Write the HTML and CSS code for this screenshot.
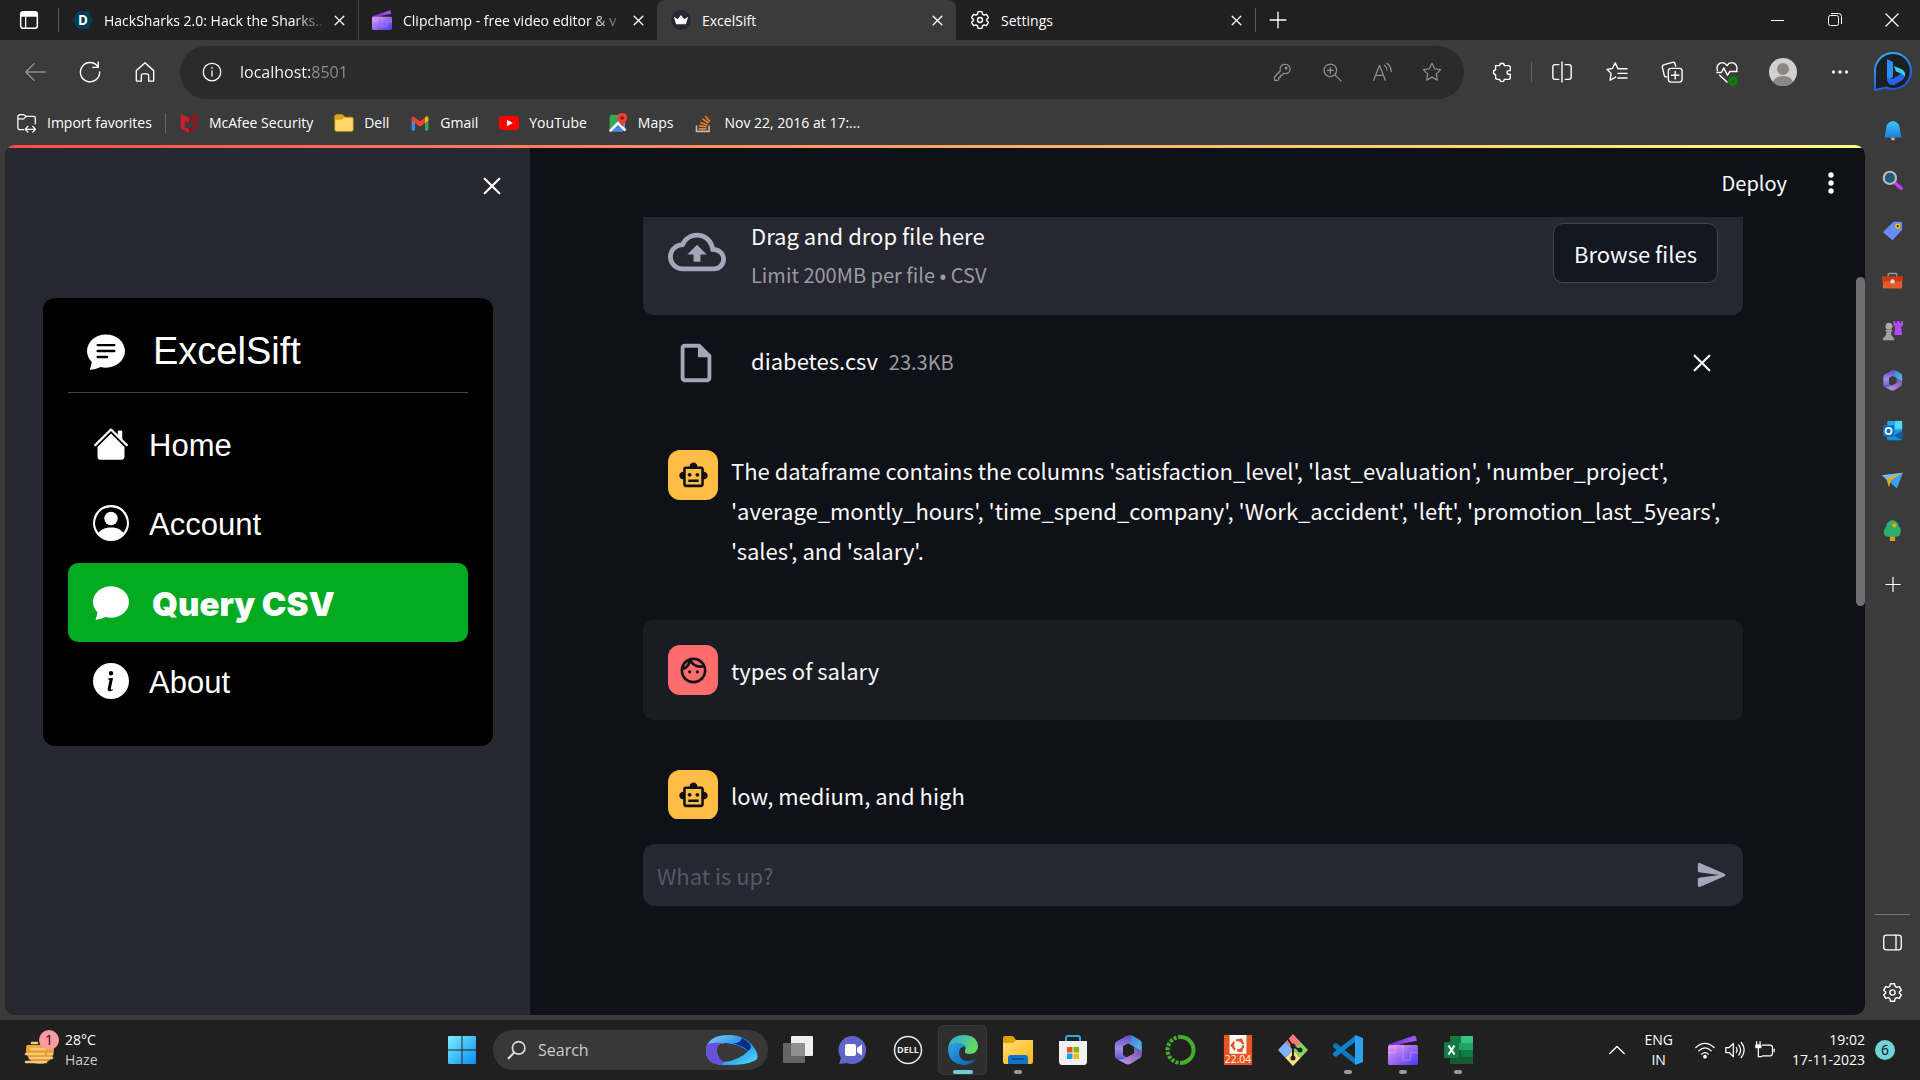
FILE: index.html
```
<!DOCTYPE html>
<html lang="en">
<head>
  <meta charset="UTF-8">
  <meta name="viewport" content="width=device-width, initial-scale=1.0">
  <title>ExcelSift</title>
  <link rel="stylesheet" href="styles.css">
</head>
<body>
  <!-- shared icons -->
  <svg class="defs" aria-hidden="true">
    <defs>
      <linearGradient id="g-bing" x1="0" y1="0" x2="0.4" y2="1"><stop offset="0" stop-color="#2bb8f5"/><stop offset="1" stop-color="#1b58e0"/></linearGradient>
      <linearGradient id="g-win" x1="0" y1="0" x2="1" y2="1"><stop offset="0" stop-color="#7ceeff"/><stop offset="1" stop-color="#0a8cf5"/></linearGradient>
      <linearGradient id="g-clip" x1="0" y1="0" x2="1" y2="1"><stop offset="0" stop-color="#e79bf8"/><stop offset="1" stop-color="#4b37ee"/></linearGradient>
      <linearGradient id="g-flap" x1="0" y1="0" x2="1" y2="0"><stop offset="0" stop-color="#6c22d8"/><stop offset="1" stop-color="#a65cf5"/></linearGradient>
      <linearGradient id="g-m1" x1="0" y1="0" x2="1" y2="1"><stop offset="0" stop-color="#3f6fd0"/><stop offset="1" stop-color="#52c8f2"/></linearGradient>
      <linearGradient id="g-m2" x1="0" y1="0" x2="0" y2="1"><stop offset="0" stop-color="#5b4bc4"/><stop offset="0.5" stop-color="#a78ae8"/><stop offset="1" stop-color="#3658c4"/></linearGradient>
      <linearGradient id="g-m3" x1="1" y1="0" x2="0" y2="1"><stop offset="0" stop-color="#6a4aa8"/><stop offset="1" stop-color="#cda0ea"/></linearGradient>
      <linearGradient id="g-edge1" x1="0" y1="0" x2="1" y2="0.4"><stop offset="0" stop-color="#25a5e2"/><stop offset="1" stop-color="#63dc63"/></linearGradient>
      <linearGradient id="g-edge2" x1="0" y1="0" x2="1" y2="1"><stop offset="0" stop-color="#2ea8e8"/><stop offset="1" stop-color="#0a5cb4"/></linearGradient>
      <linearGradient id="g-bell" x1="0" y1="0" x2="0" y2="1"><stop offset="0" stop-color="#3dc8f8"/><stop offset="1" stop-color="#1f7fd8"/></linearGradient>
      <linearGradient id="g-sun" x1="0" y1="0" x2="0" y2="1"><stop offset="0" stop-color="#f8c33a"/><stop offset="1" stop-color="#ee7a1c"/></linearGradient>
      <linearGradient id="g-loop" x1="0" y1="0" x2="1" y2="1"><stop offset="0" stop-color="#8ed0ff"/><stop offset="0.5" stop-color="#1c8be8"/><stop offset="1" stop-color="#56e6f6"/></linearGradient>
      <linearGradient id="g-folder" x1="0" y1="0" x2="1" y2="1"><stop offset="0" stop-color="#ffdd70"/><stop offset="1" stop-color="#fcb714"/></linearGradient>
    </defs>
    <symbol id="close" viewBox="0 0 24 24"><path d="M4 4l16 16M20 4L4 20" fill="none" stroke="currentColor" stroke-width="2.4" stroke-linecap="round"/></symbol>
    <symbol id="plus" viewBox="0 0 24 24"><path d="M12 2v20M2 12h20" fill="none" stroke="currentColor" stroke-width="1.6"/></symbol>
    <symbol id="gear" viewBox="0 0 24 24"><path d="M9.7 2h4.6l.7 3 1.9 1.1 2.9-.9 2.3 4-2.2 2.1v1.4l2.2 2.1-2.3 4-2.9-.9-1.9 1.1-.7 3H9.700l-.7-3-1.900-1.100-2.900.9-2.300-4 2.200-2.100v-1.400L1.900 9.200l2.300-4 2.900.9L9 5z" fill="none" stroke="currentColor" stroke-width="1.6" stroke-linejoin="round"/><circle cx="12" cy="12" r="3" fill="none" stroke="currentColor" stroke-width="1.6"/></symbol>
    <symbol id="clip" viewBox="0 0 24 24"><path d="M0 7.500L20 .8q2-.6 2.600 1.200L23 4.500 1.500 9z" fill="url(#g-flap)"/><rect x="0" y="8" width="24" height="16" rx="1.500" fill="url(#g-clip)"/><path d="M0 14h6V8h6v12h6v-6h6" fill="none" stroke="#fff" stroke-opacity=".2" stroke-width="1"/></symbol>
    <symbol id="m365" viewBox="0 0 24 24"><path d="M9 1.500L13 .3q2-.3 3 .5l5.500 3.200q1.500 1 1.500 2.500V14l-6 2.500V9.500l-6-3.500z" fill="url(#g-m1)"/><path d="M14 .3q-1-.3-3 .5L3 5Q1.500 6 1.500 8v9q0 1 1.500 2l4 2.500 5-3-4-2.500V9l7-4z" fill="url(#g-m2)"/><path d="M23 12.500V16q0 1.500-1.500 2.500L14 23q-2 1-4 0l-6-3.500h3q1 0 2-.7l8-4.300V9.500z" fill="url(#g-m3)"/></symbol>
    <symbol id="robot" viewBox="0 0 24 24"><path fill="currentColor" d="M20 9V7c0-1.100-.9-2-2-2h-3c0-1.660-1.340-3-3-3S9 3.340 9 5H6c-1.100 0-2 .9-2 2v2c-1.660 0-3 1.340-3 3s1.340 3 3 3v4c0 1.100.9 2 2 2h12c1.100 0 2-.9 2-2v-4c1.660 0 3-1.340 3-3s-1.340-3-3-3zm-2 10H6V7h12v12zm-9-6c-.83 0-1.500-.67-1.500-1.500S8.170 10 9 10s1.500.67 1.500 1.500S9.830 13 9 13zm7.500-1.500c0 .83-.67 1.500-1.500 1.500s-1.500-.67-1.500-1.500.67-1.500 1.500-1.500 1.500.67 1.500 1.500zM8 15h8v2H8v-2z"/></symbol>
  </svg>

  <div class="tabbar">
    <button class="tab-actions" aria-label="Tab actions"><svg viewBox="0 0 24 24" width="20" height="20"><rect x="2" y="2" width="20" height="20" rx="3" fill="none" stroke="#fff" stroke-width="1.800"/><path d="M2 8V4q0-2 2-2h16q2 0 2 2v4z" fill="#fff"/><path d="M8 8v14" stroke="#fff" stroke-width="1.500"/></svg></button>
    <div class="tab">
      <svg class="favicon" viewBox="0 0 24 24"><path d="M6 1h12l6 11-6 11H6L0 12z" fill="#003e54"/><text x="12" y="18" text-anchor="middle" class="devpost">D</text></svg>
      <span class="tab-title fade">HackSharks 2.0: Hack the Sharks..</span>
      <button class="tab-close" aria-label="Close tab"><svg width="13" height="13"><use href="#close"/></svg></button>
    </div>
    <div class="tab divided">
      <svg class="favicon"><use href="#clip"/></svg>
      <span class="tab-title fade">Clipchamp - free video editor &amp; v</span>
      <button class="tab-close" aria-label="Close tab"><svg width="13" height="13"><use href="#close"/></svg></button>
    </div>
    <div class="tab active">
      <svg class="favicon" viewBox="0 0 24 24"><circle cx="12" cy="12" r="12" fill="#262730"/><path d="M3.500 8l4.500 3 4-5 4 5 4.500-3-2.500 9H6z" fill="#fff"/></svg>
      <span class="tab-title">ExcelSift</span>
      <button class="tab-close" aria-label="Close tab"><svg width="13" height="13"><use href="#close"/></svg></button>
    </div>
    <div class="tab">
      <svg class="favicon"><use href="#gear"/></svg>
      <span class="tab-title">Settings</span>
      <button class="tab-close" aria-label="Close tab"><svg width="13" height="13"><use href="#close"/></svg></button>
    </div>
    <button class="new-tab" aria-label="New tab"><svg width="20" height="20"><use href="#plus"/></svg></button>
    <div class="window-buttons">
      <button aria-label="Minimize"><svg width="14" height="14"><path d="M0 7.500h13" stroke="#fff"/></svg></button>
      <button aria-label="Restore"><svg width="14" height="14" fill="none" stroke="#fff"><rect x=".5" y="2.500" width="10" height="10" rx="2"/><path d="M3 .5h7.500q3 0 3 3V11"/></svg></button>
      <button aria-label="Close"><svg width="14" height="14"><path d="M.5.5l13 13M13.500.5l-13 13" stroke="#fff" stroke-width="1.200"/></svg></button>
    </div>
  </div>

  <div class="toolbar">
    <button class="tool dim" aria-label="Back"><svg class="line" viewBox="0 0 24 24"><path d="M23 12H2M11 3l-9 9 9 9"/></svg></button>
    <button class="tool" aria-label="Refresh"><svg class="line" viewBox="0 0 24 24"><path d="M20.500 6A10.500 10.500 0 1 0 22.500 12M21 1v6h-6"/></svg></button>
    <button class="tool" aria-label="Home"><svg class="line" viewBox="0 0 24 24"><path d="M2.500 10.500L12 2l9.500 8.500V21q0 1-1 1H16v-6q0-2-2-2h-4q-2 0-2 2v6H3.500q-1 0-1-1z"/></svg></button>
    <div class="address">
      <svg class="line" viewBox="0 0 24 24"><circle cx="12" cy="12" r="10.500"/><path d="M12 10.500V17M12 6.500v1"/></svg>
      <input type="text" value="localhost:8501" aria-label="Address">
      <button class="tool dim" aria-label="Passwords"><svg class="line" viewBox="0 0 24 24"><path d="M16 3a5.500 5.500 0 1 1-2 10.500L12 16h-2v2.500H8V21l-1 1H3v-4l7-7.500A5.500 5.500 0 0 1 16 3z"/><circle cx="17" cy="7.500" r="1"/></svg></button>
      <button class="tool dim" aria-label="Zoom"><svg class="line" viewBox="0 0 24 24"><circle cx="10" cy="10" r="7.500"/><path d="M15.500 15.500L23 23M10 6.500v7M6.500 10h7"/></svg></button>
      <button class="tool dim" aria-label="Read aloud"><svg class="line" viewBox="0 0 24 24"><path d="M2 22L9 4l7 18M4.500 16h9M15 4q3 2.500 3 6M18 1.500q5 4 5 10"/></svg></button>
      <button class="tool dim" aria-label="Favorite"><svg class="line" viewBox="0 0 24 24"><path d="M12 1.500l3.200 6.700 7.300 1-5.300 5.100 1.300 7.400L12 18.200l-6.500 3.500 1.300-7.400L1.500 9.200l7.300-1z"/></svg></button>
    </div>
    <button class="tool ext" aria-label="Extensions"><svg class="line" viewBox="0 0 24 24"><path d="M5 5h4.500a2.500 2.500 0 1 1 5 0H19q2 0 2 2v3.500h-1.500a2 2 0 0 0 0 4H21V18q0 2-2 2h-4.500a2.500 2.500 0 0 1-5 0H7q-2 0-2-2v-3a2.800 2.800 0 0 1 0-5.500z"/></svg></button>
    <span class="rule"></span>
    <button class="tool" aria-label="Split screen"><svg class="line" viewBox="0 0 24 24"><path d="M12 1v22M8.500 4H4.500Q2 4 2 6.500v11Q2 20 4.500 20h4M15.500 4h4Q22 4 22 6.500v11q0 2.500-2.500 2.500h-4"/></svg></button>
    <button class="tool" aria-label="Favorites"><svg class="line" viewBox="0 0 24 24"><path d="M13 8.500L10 2 7 8.200l-6 .9 4.500 4.400-1 7.500 6-3.500M13 8.500h10M13 13.500h10M13 18.500h10"/></svg></button>
    <button class="tool" aria-label="Collections"><svg class="line" viewBox="0 0 24 24"><rect x="8" y="8" width="15" height="15" rx="3"/><path d="M15.500 11.500v8M11.500 15.500h8M6 17.500q-2 0-2.500-2L1.500 7q-.5-2.500 2-3l9-2.500q2.500-.5 3 2l.5 2"/></svg></button>
    <button class="tool" aria-label="Browser essentials"><svg class="line" viewBox="0 0 24 24"><path d="M1.500 10.500C-.5 2 8-1 12 5c4-6 12.500-3 10.500 5.500M1 12.500h5l2.500-5 4 8 2.500-4h8M4 15.500l8 7.500"/></svg><svg class="check" viewBox="0 0 12 12"><circle cx="6" cy="6" r="6" fill="#0f7b0f"/><path d="M3.500 6.500l2 1.500 3-4" fill="none" stroke="#3a3a3a"/></svg></button>
    <button class="tool wide" aria-label="Profile"><svg viewBox="0 0 28 28" width="28" height="28"><circle cx="14" cy="14" r="14" fill="#d2d0ce"/><circle cx="14" cy="11" r="6" fill="#8a8886"/><path d="M4 24q2-6 10-6t10 6a14 14 0 0 1-20 0z" fill="#8a8886"/></svg></button>
    <button class="tool wide" aria-label="Settings and more"><svg viewBox="0 0 18 18" width="18" height="18" fill="#fff"><circle cx="2.500" cy="9" r="1.700"/><circle cx="9" cy="9" r="1.700"/><circle cx="15.500" cy="9" r="1.700"/></svg></button>
    <button class="bing" aria-label="Discover"><svg viewBox="0 0 40 40" width="40" height="40"><path d="M2 38V20A18 18 0 1 1 20 37q-4 0-7-1.500L2 38z" fill="#1e1f23" stroke="url(#g-bing)" stroke-width="2"/><path d="M14 7l6 3v15l-6 4z" fill="#2b8ef5"/><path d="M14 26l6 1 9-6q3 1 2 5-1 2-3 3l-7 4q-7 1-7-7z" fill="#2a62f0"/><path d="M21 14l7 3q5 2 4 8-1-2-4-3.500l-5-2z" fill="#35d6e8"/></svg></button>
  </div>

  <div class="browser">
    <div class="window">
      <nav class="bookmarks">
        <a class="bookmark" href="#"><svg viewBox="0 0 24 24" class="line"><path d="M1 7h7l3-3h9q2 0 2 2v7M8 20H4q-3 0-3-3V5q0-3 3-3h4l3 2M10 19.500h12M13 16l-3 3.500 3 3.500M19 16l3 3.500-3 3.500"/></svg>Import favorites</a>
        <span class="rule"></span>
        <a class="bookmark" href="#"><svg viewBox="0 0 24 24"><path d="M2 1l10 5v6L7 9v8l5 2v5L2 19z" fill="#c8202c"/><path d="M22 1L12 6v6l5-3v8l-5 2v5l10-5z" fill="#8c1620"/></svg>McAfee Security</a>
        <a class="bookmark" href="#"><svg viewBox="0 0 24 24"><path d="M1 4q0-2 2-2h7l3 3h8q2 0 2 2v13q0 2-2 2H3q-2 0-2-2z" fill="#ffd76a" stroke="#c79410"/><path d="M1 8h8l4-3-3-3H3Q1 2 1 4z" fill="#d9a516"/></svg>Dell</a>
        <a class="bookmark" href="#"><svg viewBox="0 0 24 24"><path d="M2 7v14h4V10z" fill="#4285f4"/><path d="M22 7v14h-4V10z" fill="#34a853"/><path d="M18 5.500l2-1.300Q22 3.500 22 6v3l-4 3z" fill="#fbbc04"/><path d="M2 9V6q0-2.500 2.500-1.500L12 10l6-4.500V12l-6 4.500z" fill="#ea4335"/></svg>Gmail</a>
        <a class="bookmark" href="#"><svg viewBox="0 0 24 24"><rect x="0" y="3.500" width="24" height="17" rx="4" fill="#f00"/><path d="M9.500 8l7 4-7 4z" fill="#fff"/></svg>YouTube</a>
        <a class="bookmark" href="#"><svg viewBox="0 0 24 24"><path d="M2 5q0-3 3-3h10v20H5q-3 0-3-3z" fill="#34a853"/><path d="M2 22L20 4v15q0 3-3 3z" fill="#e6e6e6"/><path d="M2 20L14 8l6 6v5q0 3-3 3H5z" fill="#4285f4"/><path d="M2 22l10-10 9 9" fill="none" stroke="#fff" stroke-width="3"/><path d="M17 0q6 0 6 6 0 3-6 10-6-7-6-10 0-6 6-6z" fill="#ea4335"/><circle cx="17" cy="6" r="2" fill="#811411"/></svg>Maps</a>
        <a class="bookmark" href="#"><svg viewBox="0 0 24 24" fill="none" stroke-width="2"><path d="M3 15v7h15v-7" stroke="#bcbbbb"/><path d="M6 19h9M6 15.500l9 1M7.500 11.500l8.500 3M10 7l7.500 5M13.500 3.500l5.500 7" stroke="#f48024"/></svg>Nov 22, 2016 at 17:...</a>
      </nav>

      <div class="page">
        <aside class="sidebar">
          <button class="sidebar-close" aria-label="Close sidebar"><svg width="22" height="22"><use href="#close"/></svg></button>
          <nav class="menu">
            <h1 class="menu-title"><svg viewBox="0 0 16 16"><path fill-rule="evenodd" d="M16 8c0 3.866-3.582 7-8 7a9.060 9.060 0 0 1-2.347-.306c-.584.296-1.925.864-4.181 1.234-.2.032-.352-.176-.273-.362.354-.836.674-1.950.77-2.966C.744 11.370 0 9.760 0 8c0-3.866 3.582-7 8-7s8 3.134 8 7zM4.500 5a.5.5 0 0 0 0 1h7a.5.5 0 0 0 0-1h-7zm0 2.500a.5.5 0 0 0 0 1h7a.5.5 0 0 0 0-1h-7zm0 2.500a.5.5 0 0 0 0 1h4a.5.5 0 0 0 0-1h-4z"/></svg>ExcelSift</h1>
            <a class="menu-item" href="#"><svg viewBox="0 0 16 16"><path d="m8 3.293 6 6V13.500a1.500 1.500 0 0 1-1.500 1.500h-9A1.500 1.500 0 0 1 2 13.500V9.293l6-6zm5-.793V6l-2-2V2.500a.5.5 0 0 1 .5-.5h1a.5.5 0 0 1 .5.5z"/><path d="M7.293 1.500a1 1 0 0 1 1.414 0l6.647 6.646a.5.5 0 0 1-.708.708L8 2.207 1.354 8.854a.5.5 0 1 1-.708-.708L7.293 1.500z"/></svg>Home</a>
            <a class="menu-item" href="#"><svg viewBox="0 0 16 16"><path d="M11 6a3 3 0 1 1-6 0 3 3 0 0 1 6 0z"/><path fill-rule="evenodd" d="M0 8a8 8 0 1 1 16 0A8 8 0 0 1 0 8zm8-7a7 7 0 0 0-5.468 11.370C3.242 11.226 4.805 10 8 10s4.757 1.225 5.468 2.370A7 7 0 0 0 8 1z"/></svg>Account</a>
            <a class="menu-item selected" href="#"><svg viewBox="0 0 16 16"><path d="M8 15c4.418 0 8-3.134 8-7s-3.582-7-8-7-8 3.134-8 7c0 1.760.743 3.370 1.970 4.600-.097 1.016-.417 2.130-.771 2.966-.079.186.074.394.273.362 2.256-.37 3.597-.938 4.180-1.234A9.060 9.060 0 0 0 8 15z"/></svg>Query CSV</a>
            <a class="menu-item" href="#"><svg viewBox="0 0 16 16"><path d="M8 16A8 8 0 1 0 8 0a8 8 0 0 0 0 16zm.93-9.412-1 4.705c-.07.34.029.533.304.533.194 0 .487-.07.686-.246l-.088.416c-.287.346-.92.598-1.465.598-.703 0-1.002-.422-.808-1.319l.738-3.468c.064-.293.006-.399-.287-.47l-.451-.081.082-.381 2.290-.287zM8 5.500a1 1 0 1 1 0-2 1 1 0 0 1 0 2z"/></svg>About</a>
          </nav>
        </aside>

        <main class="main">
          <div class="content">
            <header class="header">
              <button class="deploy">Deploy</button>
              <button class="kebab" aria-label="Menu"><svg viewBox="0 0 6 22" width="6" height="22" fill="#fff"><circle cx="3" cy="3" r="2.700"/><circle cx="3" cy="11" r="2.700"/><circle cx="3" cy="19" r="2.700"/></svg></button>
            </header>
            <div class="column chat-log">
              <section class="dropzone">
                <svg class="cloud" viewBox="0 0 24 24"><path d="M19.350 10.040A7.490 7.490 0 0 0 12 4C9.110 4 6.600 5.640 5.350 8.040A5.994 5.994 0 0 0 0 14c0 3.310 2.690 6 6 6h13c2.760 0 5-2.240 5-5 0-2.640-2.050-4.780-4.650-4.960zM19 18H6c-2.210 0-4-1.790-4-4 0-2.050 1.530-3.760 3.560-3.970l1.070-.11.5-.95A5.469 5.469 0 0 1 12 6c2.620 0 4.880 1.860 5.390 4.430l.3 1.500 1.530.11A2.980 2.980 0 0 1 22 15c0 1.650-1.350 3-3 3zM8 13h2.550v3h2.900v-3H16l-4-4z"/></svg>
                <div class="drop-text">
                  <span>Drag and drop file here</span>
                  <small>Limit 200MB per file • CSV</small>
                </div>
                <button class="browse">Browse files</button>
              </section>
              <div class="file">
                <svg class="file-icon" viewBox="0 0 24 24"><path d="M14 2H6c-1.100 0-1.990.9-1.990 2L4 20c0 1.100.89 2 1.990 2H18c1.100 0 2-.9 2-2V8l-6-6zM6 20V4h7v5h5v11H6z"/></svg>
                <div class="file-name">diabetes.csv <small>23.3KB</small></div>
                <button class="file-remove" aria-label="Remove file"><svg width="22" height="22"><use href="#close"/></svg></button>
              </div>
              <div class="message">
                <span class="avatar bot"><svg><use href="#robot"/></svg></span>
                <p>The dataframe contains the columns 'satisfaction_level', 'last_evaluation', 'number_project', 'average_montly_hours', 'time_spend_company', 'Work_accident', 'left', 'promotion_last_5years', 'sales', and 'salary'.</p>
              </div>
              <div class="message user">
                <span class="avatar human"><svg viewBox="0 0 24 24"><path fill="currentColor" fill-rule="evenodd" d="M10.250 13a1.250 1.250 0 1 1-2.500 0 1.250 1.250 0 0 1 2.500 0zM15 11.750a1.250 1.250 0 1 0 0 2.500 1.250 1.250 0 0 0 0-2.500zm7 .25c0 5.520-4.480 10-10 10S2 17.520 2 12 6.480 2 12 2s10 4.480 10 10zM10.660 4.120C12.060 6.440 14.600 8 17.500 8c.46 0 .91-.05 1.340-.12C17.440 5.560 14.900 4 12 4c-.46 0-.91.05-1.340.12zM4.420 9.470a8.046 8.046 0 0 0 3.660-4.440 8.046 8.046 0 0 0-3.660 4.440zM20 12c0-.78-.12-1.530-.33-2.240-.7.15-1.420.24-2.170.24a10 10 0 0 1-7.760-3.690A10.016 10.016 0 0 1 4 11.860c.01.04 0 .09 0 .14 0 4.410 3.590 8 8 8s8-3.590 8-8z"/></svg></span>
                <p>types of salary</p>
              </div>
              <div class="message">
                <span class="avatar bot"><svg><use href="#robot"/></svg></span>
                <p>low, medium, and high</p>
              </div>
            </div>
            <form class="column chat-input">
              <input type="text" placeholder="What is up?" aria-label="What is up?">
              <button type="button" aria-label="Send"><svg viewBox="0 0 24 24" width="34" height="34"><path d="M3.400 20.400l17.450-7.480c.81-.35.81-1.490 0-1.840L3.400 3.600c-.66-.29-1.390.2-1.390.91L2 9.120c0 .5.37.93.87.99L17 12 2.870 13.880c-.5.07-.87.5-.87 1l.01 4.610c0 .71.73 1.200 1.390.91z"/></svg></button>
            </form>
          </div>
          <div class="scrollbar"><div class="thumb"></div></div>
        </main>
      </div>
    </div>

    <nav class="edge-bar">
      <button aria-label="Notifications"><svg viewBox="0 0 24 24"><path d="M10 20h5l-1 3h-3z" fill="#bbb"/><path d="M12.500 1q8 1 8 10 0 4 2 9h-20q2-5 2-9 0-9 8-10z" fill="url(#g-bell)"/></svg></button>
      <button aria-label="Search"><svg viewBox="0 0 24 24"><path d="M15 15l7 6" stroke="#c13cf0" stroke-width="4" stroke-linecap="round"/><circle cx="9" cy="9" r="7" fill="#245b78" stroke="#b9b9b9" stroke-width="2.500"/></svg></button>
      <button aria-label="Shopping"><svg viewBox="0 0 24 24"><path d="M13 2h8q2 0 2 2v7L12 23 1 14z" fill="#6b8cff"/><circle cx="18" cy="7" r="3" fill="#f2c200"/><circle cx="18" cy="7" r="1.200" fill="#333"/></svg></button>
      <button aria-label="Tools"><svg viewBox="0 0 24 24"><path d="M7 8V5q0-1 1-1h8q1 0 1 1v3" fill="none" stroke="#999" stroke-width="1.500"/><rect x="1" y="12" width="22" height="9" rx="1" fill="#e8592b"/><rect x="0" y="7" width="24" height="6" rx="1" fill="#c93a13"/><circle cx="12" cy="13" r="2.500" fill="#ddd"/></svg></button>
      <button aria-label="Games"><svg viewBox="0 0 24 24"><path d="M13 1h2v2h2V1h3v2h2V1h2v5l-2 2 1 9H14l1-9-2-2z" fill="#b04af2"/><circle cx="8" cy="7" r="4" fill="#aaa"/><path d="M4 11h8v2h-2l1 5 3 3v2H1v-2l3-3 1.500-5H4z" fill="#a0a0a0"/></svg></button>
      <button aria-label="Microsoft 365"><svg><use href="#m365"/></svg></button>
      <button aria-label="Outlook"><svg viewBox="0 0 24 24"><rect x="6" y="1" width="17" height="18" rx="1" fill="#28a8ea"/><path d="M4 12l19 0v11H6z" fill="#1490df"/><path d="M15 1h8v9h-8z" fill="#50d9ff"/><path d="M23 12l-9 6 9 5z" fill="#0f5fa6"/><rect x="1" y="6" width="13" height="13" rx="1.500" fill="#0f6cbd"/><circle cx="7.500" cy="12.500" r="3.500" fill="none" stroke="#fff" stroke-width="2"/></svg></button>
      <button aria-label="Drop"><svg viewBox="0 0 24 24"><path d="M0 6l24-3-7 18-6-5z" fill="#3b9df2"/><path d="M0 6l24-3L8 13z" fill="#6ec1f8"/><path d="M5 10l19-7-14 9-2 8z" fill="#f2a516"/></svg></button>
      <button aria-label="Tree"><svg viewBox="0 0 24 24"><path d="M9 18h6v6H9z" fill="#e99b12"/><path d="M12 0q7 2 7 7 4 3 2 8-1 4-5 4H7q-5 0-5-5 0-4 3-7 0-5 7-7z" fill="#2fae6b"/><path d="M14 3l3 3-3 3-3-3z" fill="#f5a712"/></svg></button>
      <button class="customize" aria-label="Customize"><svg><use href="#plus"/></svg></button>
      <span class="edge-rule"></span>
      <button aria-label="Hide sidebar"><svg viewBox="0 0 24 24" class="line"><rect x="2" y="3.500" width="20" height="17" rx="3"/><path d="M16 4v16"/></svg></button>
      <button aria-label="Settings"><svg><use href="#gear"/></svg></button>
    </nav>
  </div>

  <footer class="taskbar">
    <button class="weather">
      <svg viewBox="0 0 36 40" width="36" height="40"><circle cx="16" cy="20" r="14" fill="url(#g-sun)"/><path d="M0 0h20v15H0z" fill="#202020"/><path d="M8 13h5M7 19h14M2 24h18M24 24h4M6 28h22M2 32h20" stroke="#e9cf7c" stroke-width="2.500" stroke-linecap="round"/><circle cx="25" cy="10" r="10" fill="#ff99a4"/><text x="25" y="15" text-anchor="middle" class="weather-count">1</text></svg>
      <span>28°C<br><span class="soft">Haze</span></span>
    </button>
    <div class="apps">
      <button class="app" aria-label="Start"><svg viewBox="0 0 30 30"><path d="M1 2q0-1 1-1h12.500v13.500H1zM15.500 1H28q1 0 1 1v12.500H15.500zM1 15.500h13.500V29H2q-1 0-1-1zM15.500 15.500H29V28q0 1-1 1H15.500z" fill="url(#g-win)"/></svg></button>
      <label class="search">
        <svg viewBox="0 0 24 24" width="20" height="20"><circle cx="14" cy="9.500" r="7.500" fill="none" stroke="#ddd" stroke-width="2"/><path d="M8.500 15L2 22" stroke="#ddd" stroke-width="2.500" stroke-linecap="round"/></svg>
        <input type="text" placeholder="Search" aria-label="Search">
        <svg viewBox="0 0 52 30" width="52" height="30"><path d="M1 10Q6 0 22 0q20 0 28 16 4 8-2 10-8 4-24 4h-8Q0 29 0 16 0 12 1 10zM14 9q-4 2-3 8 2 9 7 10 16-2 24-11Q32 9 20 8z" fill="url(#g-loop)" fill-rule="evenodd"/><path d="M1 10q3-3 15-2-6 3-5 9 1 7 7 10l-2 3Q0 29 0 16 0 12 1 10z" fill="#6a4fd8"/><path d="M36 3q14 8 6 13Q38 11 26 8q9 1 10-5z" fill="#0b2a86"/></svg>
      </label>
      <button class="app" aria-label="Task view"><svg viewBox="0 0 30 30"><rect x="8" y="1" width="22" height="20" rx="1" fill="#eee"/><rect x="0" y="8" width="22" height="20" rx="1" fill="#777" fill-opacity=".8"/></svg></button>
      <button class="app" aria-label="Chat"><svg viewBox="0 0 30 30"><path d="M15 1a14 14 0 1 1-6 27l-8 1 2-6A14 14 0 0 1 15 1z" fill="#6264c8"/><rect x="7" y="9" width="11" height="12" rx="2" fill="#fff"/><path d="M19 13l5-3.500v11L19 17z" fill="#fff"/></svg></button>
      <button class="app" aria-label="Dell"><svg viewBox="0 0 30 30"><circle cx="15" cy="15" r="13.500" fill="none" stroke="#ececec" stroke-width="1.500"/><text x="15" y="18" text-anchor="middle" class="dell">DELL</text></svg></button>
      <button class="app current" aria-label="Edge"><svg viewBox="0 0 30 30"><path d="M0 14Q1 1 15 0q14 0 15 11 0 7-8 8-6 0-5-3 3-6-6-8Q3 8 0 14z" fill="url(#g-edge1)"/><path d="M0 14Q4 7 12 8q4 1 6 4-6-1-7 5 0 9 9 9 4 0 8-2-5 6-13 6Q0 28 0 14z" fill="url(#g-edge2)"/></svg></button>
      <button class="app open" aria-label="File Explorer"><svg viewBox="0 0 30 30"><path d="M0 3q0-2 2-2h8l3 4h15q2 0 2 2v6H0z" fill="#dfa000"/><path d="M0 8h10l3-3h17v21q0 3-2 3H2q-2 0-2-3z" fill="url(#g-folder)"/><path d="M5 29v-6q0-3 3-3h14q3 0 3 3v6z" fill="#0f73c9"/><path d="M9 24h12" stroke="#064a86" stroke-width="1.500"/></svg></button>
      <button class="app" aria-label="Store"><svg viewBox="0 0 30 30"><path d="M8 6V3q0-2 2-2h10q2 0 2 2v3" fill="none" stroke="#27a9e8" stroke-width="2"/><path d="M1 6h28v20q0 4-3 4H4q-3 0-3-4z" fill="#f1f1f1"/><path d="M9 12h5.500v5.500H9z" fill="#f25022"/><path d="M15.500 12H21v5.500h-5.500z" fill="#7fba00"/><path d="M9 18.500h5.500V24H9z" fill="#00a4ef"/><path d="M15.500 18.500H21V24h-5.500z" fill="#ffb900"/></svg></button>
      <button class="app" aria-label="Microsoft 365"><svg><use href="#m365"/></svg></button>
      <button class="app" aria-label="Anaconda"><svg viewBox="0 0 30 30" fill="none" stroke="#43b02a"><path d="M13 2a13 13 0 1 1-1 26" stroke-width="4"/><path d="M13 2A13 13 0 0 0 12 28" stroke-width="4" stroke-dasharray="3 1.500"/></svg></button>
      <button class="app" aria-label="Ubuntu"><svg viewBox="0 0 30 32"><path d="M0 0h30v32H0z" fill="#e95420"/><path d="M6 0h18v20H6z" fill="#fff"/><circle cx="15" cy="11" r="5.500" fill="none" stroke="#e95420" stroke-width="2.500" stroke-dasharray="9.500 2"/><g fill="#e95420"><circle cx="9" cy="11" r="2"/><circle cx="18" cy="5.500" r="2"/><circle cx="18" cy="16.500" r="2"/></g><text x="15" y="30" text-anchor="middle" class="ubuntu">22.04</text></svg></button>
      <button class="app" aria-label="Git"><svg viewBox="0 0 30 30"><path d="M15-1l7.500 8L15 15 7.500 7z" fill="#ff7a7a"/><path d="M7.500 7L15 15l-7.500 8L0 15z" fill="#80b3ff"/><path d="M22.500 7L30 15l-7.500 8L15 15z" fill="#87d55f"/><path d="M15 15l7.500 8L15 31l-7.500-8z" fill="#ffe07a"/><path d="M10 4l5 8v11M15 11l6 4" stroke="#222" stroke-width="2" fill="none"/><g fill="#222"><circle cx="15" cy="11" r="2.500"/><circle cx="22" cy="15" r="2.500"/><circle cx="15" cy="23" r="2.500"/></g></svg></button>
      <button class="app open" aria-label="VS Code"><svg viewBox="0 0 30 30"><path d="M0 10l3-2 20 16v6L0 12z" fill="#1176bd"/><path d="M0 20l3 2L23 6V0L0 18z" fill="#0f83cf"/><path d="M22 0l8 3v24l-8 3z" fill="#29a3ee"/></svg></button>
      <button class="app open" aria-label="Clipchamp"><svg><use href="#clip"/></svg></button>
      <button class="app open" aria-label="Excel"><svg viewBox="0 0 30 30"><rect x="7" y="1" width="23" height="28" rx="1.500" fill="#21a366"/><path d="M7 1h12v7H7z" fill="#107c41"/><path d="M18 1h11q1 0 1 1v6H18z" fill="#33c481"/><path d="M7 15h23v13q0 1-1 1H8q-1 0-1-1z" fill="#185c37"/><path d="M18 15h12v7H18z" fill="#107c41"/><rect x="1" y="7" width="15" height="16" rx="1.500" fill="#107c41"/><path d="M5.500 10.500l6 9M11.500 10.500l-6 9" stroke="#fff" stroke-width="2.200"/></svg></button>
    </div>
    <div class="tray">
      <button class="tray-icon" aria-label="Hidden icons"><svg class="line" viewBox="0 0 20 20" width="18" height="18"><path d="M2 14l8-8 8 8"/></svg></button>
      <button class="lang">ENG<br>IN</button>
      <button class="status" aria-label="Network, volume, battery">
        <svg class="line" viewBox="0 0 24 24" width="20" height="20"><path d="M1 9q11-10 22 0M4.500 13q7.500-7 15 0M8 17q4-4 8 0"/><circle cx="12" cy="20" r="1.500" fill="#fff"/></svg>
        <svg class="line" viewBox="0 0 24 24" width="20" height="20"><path d="M1 9h4l5-5v16l-5-5H1zM13.500 9q2 3 0 6M16.500 6q4.500 6 0 12M19.500 3q7 9 0 18"/></svg>
        <svg class="line" viewBox="0 0 24 24" width="20" height="20"><path d="M9 6h9q3 0 3 3v7q0 3-3 3H9M23 11v3M4 8v12h4M2 2v4M6 2v4"/><path d="M1 6h6v3H1z" fill="#fff"/></svg>
      </button>
      <button class="clock">19:02<br>17-11-2023</button>
      <span class="count">6</span>
    </div>
  </footer>
</body>
</html>
```
FILE: styles.css
```
* {
  box-sizing: border-box;
}
body {
  margin: 0;
  height: 100vh;
  display: flex;
  flex-direction: column;
  overflow: hidden;
  background: #3b3b3b;
  color: #fff;
  font-family: "Open Sans", sans-serif;
  font-size: 14px;
}
button, input {
  font: inherit;
  color: inherit;
  background: none;
  border: none;
  padding: 0;
  outline: none;
}
button {
  display: flex;
  align-items: center;
  justify-content: center;
  flex: none;
}
a {
  color: inherit;
  text-decoration: none;
}
svg {
  flex: none;
}
.defs {
  position: absolute;
  width: 0;
  height: 0;
}
.line {
  fill: none;
  stroke: currentColor;
  stroke-width: 1.5;
  stroke-linejoin: round;
  stroke-linecap: round;
}
.rule {
  width: 1px;
  height: 20px;
  margin: 0 2px;
  background: #666;
}

/* tabs */
.tabbar {
  display: flex;
  height: 40px;
  background: #202020;
}
.tab-actions {
  width: 59px;
  border-right: 1px solid #5c5c5c;
  margin: 8px 0;
}
.tab {
  display: flex;
  align-items: center;
  flex: 0 1 299px;
  min-width: 0;
  padding: 0 9px 0 14px;
}
.tab.divided {
  box-shadow: inset 1px 0 #444;
}
.tab.active {
  background: #3b3b3b;
  border-radius: 8px 8px 0 0;
}
.favicon {
  width: 20px;
  height: 20px;
}
.tab-title {
  flex: 1;
  margin: 0 2px 0 11px;
  white-space: nowrap;
  overflow: hidden;
}
.tab-title.fade {
  mask-image: linear-gradient(to right, #000 85%, transparent);
}
.tab-close {
  width: 20px;
  height: 20px;
}
.new-tab {
  width: 44px;
  border-left: 1px solid #5c5c5c;
  margin: 8px 0;
}
.window-buttons {
  display: flex;
  margin-left: auto;
}
.window-buttons button {
  width: 57px;
}

/* address row */
.toolbar {
  display: flex;
  align-items: center;
  height: 64px;
  padding: 0 2px 0 7px;
}
.tool {
  position: relative;
  width: 55px;
  height: 40px;
}
.tool.wide {
  width: 57px;
}
.tool .line {
  width: 22px;
  height: 22px;
}
.tool.dim {
  color: #8f8f8f;
}
.tool.ext {
  margin-left: 10px;
}
.tool .check {
  position: absolute;
  right: 16px;
  bottom: 6px;
  width: 10px;
  height: 10px;
}
.address {
  display: flex;
  align-items: center;
  flex: 1;
  height: 53px;
  margin-left: 8px;
  padding: 0 7px 0 22px;
  border-radius: 27px;
  background: #2b2b2b;
}
.address .line {
  width: 20px;
  height: 20px;
}
.address input {
  flex: 1;
  min-width: 0;
  margin-left: 18px;
  font-size: 16px;
  /* host is white, port is grey */
  background: linear-gradient(to right, #fff 72px, #8f8f8f 72px);
  background-clip: text;
  color: transparent;
}
.address .tool {
  width: 50px;
}
.bing {
  width: 50px;
}

.browser {
  flex: 1;
  display: flex;
  min-height: 0;
}
.window {
  flex: 1;
  min-width: 0;
  display: flex;
  flex-direction: column;
  padding: 0 0 5px 5px;
}
.bookmarks {
  display: flex;
  align-items: center;
  gap: 21px;
  height: 41px;
  padding: 0 12px 4px;
}
.bookmarks .rule {
  margin: 0 -8px;
}
.bookmark {
  display: flex;
  align-items: center;
  gap: 10px;
}
.bookmark svg {
  width: 20px;
  height: 20px;
}

/* edge side bar */
.edge-bar {
  display: flex;
  flex-direction: column;
  align-items: center;
  width: 55px;
  padding: 1px 0 3px;
}
.edge-bar button {
  width: 50px;
  height: 50px;
}
.edge-bar svg {
  width: 21px;
  height: 21px;
}
.edge-bar .customize {
  margin-top: 4px;
}
.edge-bar .customize svg {
  width: 18px;
}
.edge-rule {
  width: 35px;
  height: 1px;
  margin: auto 0 2px;
  background: #777;
}

/* streamlit page */
.page {
  flex: 1;
  display: flex;
  min-height: 0;
  border-radius: 10px;
  overflow: hidden;
  background: linear-gradient(to right, #ff4b4b, #fffd80) top / 100% 3px no-repeat #0e1117;
  padding-top: 3px;
  color: #fafafa;
  font-family: "Noto Sans CJK JP", "Source Sans Pro", sans-serif;
  font-size: 22px;
}
.page small {
  color: #9b9ca2;
  font-size: 20px;
}
.sidebar {
  flex: none;
  width: 525px;
  padding: 0 37px 0 38px;
  background: #262730;
}
.sidebar-close {
  width: 22px;
  height: 22px;
  margin: 27px -10px 101px auto;
}
.menu {
  padding: 25px;
  border-radius: 12px;
  background: #000;
  color: #fff;
  font-family: "Liberation Sans", Arial, sans-serif;
}
.menu svg {
  fill: currentColor;
}
.menu-title {
  display: flex;
  align-items: center;
  gap: 28px;
  height: 70px;
  margin: 0 0 12px;
  padding: 0 0 12px 19px;
  border-bottom: 1px solid #444;
  font-size: 38px;
  font-weight: normal;
}
.menu-title svg {
  width: 38px;
  height: 38px;
  margin-bottom: 2px;
}
.menu-item {
  display: flex;
  align-items: center;
  gap: 20px;
  height: 79px;
  padding: 3px 0 0 25px;
  border-radius: 10px;
  font-size: 31px;
}
.menu-item svg {
  width: 36px;
  height: 36px;
  margin-bottom: 4px;
}
.menu-item.selected {
  gap: 23px;
  background: #02ab21;
  font-family: Inter, "Arial Black", sans-serif;
  font-size: 33px;
  font-weight: 900;
}
.main {
  flex: 1;
  display: flex;
  min-width: 0;
}
.content {
  flex: 1;
  min-width: 0;
  display: flex;
  flex-direction: column;
}
.scrollbar {
  width: 9px;
  padding-top: 129px;
}
.thumb {
  height: 329px;
  border-radius: 5px;
  background: #6e6f73;
}
.header {
  display: flex;
  align-items: center;
  justify-content: flex-end;
  gap: 41px;
  flex: none;
  height: 69px;
  padding-right: 22px;
}
.deploy {
  font-size: 20px;
}
.column {
  width: 100%;
  max-width: 1100px;
  margin: 0 auto;
}
.chat-log {
  flex: 0 1 602px;
  overflow: hidden;
}
.dropzone {
  display: flex;
  align-items: flex-start;
  height: 98px;
  padding: 6px 25px 0;
  border-radius: 0 0 10px 10px;
  background: #262730;
}
.cloud, .file-icon {
  width: 58px;
  height: 58px;
  fill: #a3a8b8;
}
.drop-text {
  display: flex;
  flex-direction: column;
  flex: 1;
  margin-left: 25px;
  line-height: 40px;
  margin-top: -8px;
}
.browse {
  height: 60px;
  padding: 0 20px;
  border: 1px solid #41444e;
  border-radius: 10px;
  background: #131720;
}
.file {
  display: flex;
  align-items: center;
  height: 60px;
  margin-top: 18px;
  padding: 0 30px;
}
.file-icon {
  width: 46px;
  height: 46px;
  margin-right: 32px;
}
.file-name {
  padding-bottom: 6px;
}
.file small {
  margin-left: 6px;
}
.file-remove {
  margin-left: auto;
}
.message {
  display: flex;
  align-items: flex-start;
  gap: 13px;
  margin-top: 25px;
  padding: 25px 0 25px 25px;
  border-radius: 10px;
}
.file + .message {
  margin-top: 32px;
}
.message p {
  flex: 1;
  align-self: center;
  margin: 0;
  line-height: 40px;
}
.message.user {
  background: #1a1c24;
}
.avatar {
  display: flex;
  align-items: center;
  justify-content: center;
  flex: none;
  width: 50px;
  height: 50px;
  border-radius: 12px;
  color: #0e1117;
}
.avatar svg {
  width: 31px;
  height: 31px;
}
.bot {
  background: #ffbd45;
}
.human {
  background: #ff6c6c;
}
.chat-input {
  display: flex;
  align-items: center;
  height: 62px;
  margin-top: 25px;
  padding: 0 14px;
  border-radius: 12px;
  background: #262730;
}
.chat-input input {
  flex: 1;
  min-width: 0;
}
.chat-input input::placeholder {
  color: #555867;
}
.chat-input svg {
  fill: #a3a8b8;
}

/* windows taskbar */
.taskbar {
  display: grid;
  grid-template-columns: 1fr auto 1fr;
  align-items: center;
  height: 60px;
  padding: 0 25px 0 24px;
  background: #202020;
  line-height: 20px;
}
.weather {
  gap: 5px;
  justify-self: start;
  text-align: left;
}
.soft {
  color: #ccc;
}
.apps {
  display: flex;
  align-items: center;
}
.app {
  position: relative;
  width: 49px;
  height: 50px;
  margin: 0 3px;
  border-radius: 6px;
}
.app svg {
  width: 30px;
  height: 30px;
  overflow: visible;
}
.app.current {
  background: #2e2e2e;
  box-shadow: inset 0 0 0 1px #383838;
}
.app.open::after, .app.current::after {
  content: "";
  position: absolute;
  left: 50%;
  bottom: 1px;
  width: 8px;
  height: 4px;
  margin-left: -4px;
  border-radius: 2px;
  background: #999;
}
.app.current::after {
  width: 20px;
  margin-left: -10px;
  background: #6fcdd6;
}
.search {
  display: flex;
  align-items: center;
  width: 275px;
  height: 40px;
  margin: 0 2px 0 4px;
  padding: 0 10px 0 14px;
  border-radius: 20px;
  background: #383838;
  font-size: 16px;
}
.search input {
  flex: 1;
  min-width: 0;
  margin-left: 11px;
}
.search input::placeholder {
  color: #ccc;
}
.tray {
  display: flex;
  align-items: center;
  justify-content: flex-end;
}
.tray-icon {
  margin-right: 18px;
}
.lang {
  margin-right: 22px;
}
.status {
  gap: 10px;
  margin-right: 17px;
}
.clock {
  text-align: right;
}
.count {
  width: 20px;
  height: 20px;
  margin-left: 10px;
  border-radius: 50%;
  background: #6fd3da;
  color: #111;
  text-align: center;
}
.devpost {
  fill: #fff;
  font-weight: 700;
  font-size: 16px;
}
.weather-count {
  fill: #111;
  font-size: 14px;
}
.dell {
  fill: #ececec;
  font-weight: 700;
  font-size: 9px;
}
.ubuntu {
  fill: #fff;
  font-size: 11px;
}
```
